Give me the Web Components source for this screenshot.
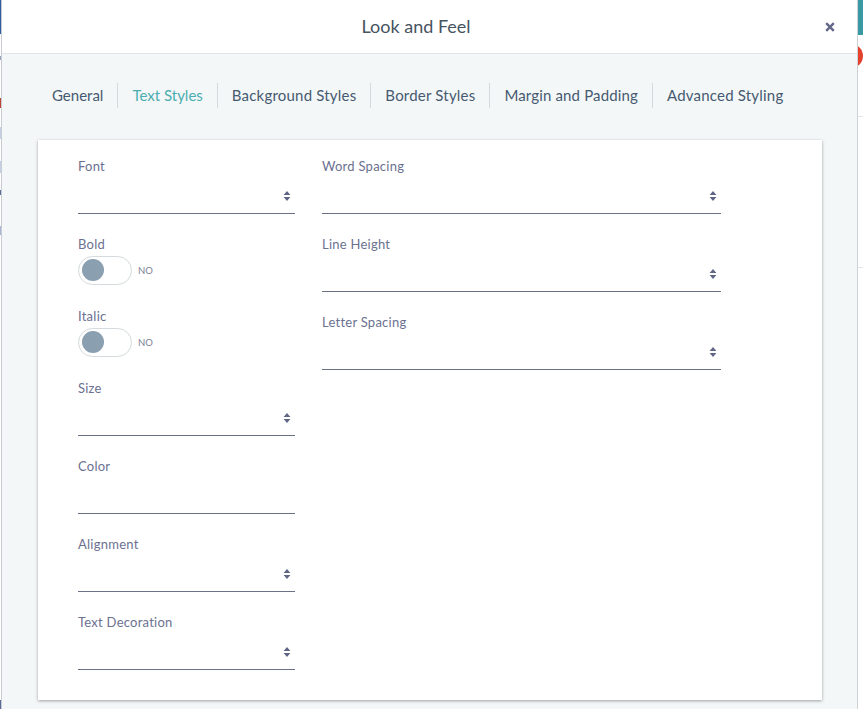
<!DOCTYPE html>
<html><head><meta charset="utf-8"><style>
html,body{margin:0;height:100%;background:#fff;overflow:hidden}
body{font-family:"Lato","Noto Sans",sans-serif}
</style></head><body>
<template id="t-app"><style>
:host{display:flex;width:863px;height:709px;overflow:hidden}
.l{flex:0 0 2px;background:linear-gradient(#c9ccd2,#c9ccd2) 1px 0/1px 100% no-repeat,linear-gradient(to bottom,#2f5c9f 0 34px,#fff 34px 56px,#98a4bd 56px 60px,#fff 60px 98px,#c0463a 98px 108px,#fff 108px 127px,#c3d0e3 127px 139px,#fff 139px 161px,#c3d0e3 161px 173px,#fff 173px 190px,#5a6b96 190px 195px,#fff 195px 226px,#a9b6cf 226px 235px,#fff 235px 700px,#5a6b96 700px 709px) 0 0/1px 100% no-repeat}
.m{flex:0 0 855px;display:block}
.r{flex:1;position:relative;background:#fff;overflow:hidden}
.teal{height:35px;background:#3a9aa3}
.dot{position:absolute;left:-18px;top:44px;width:24px;height:24px;border-radius:50%;background:#e4412f}
.ln{position:absolute;left:0;right:0;height:1px;background:#dfe6e8}
.edge{position:absolute;left:0;top:0;bottom:0;width:1px;background:#cfd2d4}
</style><div class="l"></div><div class="m"><slot></slot></div><div class="r"><div class="teal"></div><div class="dot"></div><div class="ln" style="top:116px"></div><div class="ln" style="top:267px"></div><div class="edge"></div></div></template>

<template id="t-modal"><style>
:host{display:flex;flex-direction:column;height:709px;background:#f4f7f8;border-radius:0 6px 0 0;overflow:hidden}
header{flex:0 0 53px;box-sizing:content-box;background:#fff;border-bottom:1px solid #e1e5e8;display:flex;align-items:center;justify-content:center;position:relative;font-size:18px;color:#47535f;padding-right:27px}
header span{margin-top:-2px}
svg{position:absolute;left:823px;top:22px;width:10px;height:10px}
.b{padding:28px 35px 0 36px;display:flex;flex-direction:column;gap:32px}
</style><header><span>Look and Feel</span><svg viewBox="0 0 10 10"><path d="M1.2 1.2 8.8 8.8M8.8 1.2 1.2 8.8" stroke="#64698a" stroke-width="2.4" fill="none"/></svg></header><div class="b"><slot></slot></div></template>

<template id="t-tabs"><style>
:host{display:flex;height:26px;align-items:center;padding-left:0}
</style><slot></slot></template>

<template id="t-tab"><style>
:host{display:flex;align-items:center;height:25px;padding:0 14px;border-left:1px solid #d5d9dc;font-size:15px;letter-spacing:.2px;color:#465a70;white-space:nowrap}
:host(:first-child){border-left:0;letter-spacing:0}
:host([active]){color:#4aaeb0;letter-spacing:0}
:host([tight]){letter-spacing:.15px}
</style><slot></slot></template>

<template id="t-card"><style>
:host{display:grid;grid-template-columns:217px 399px;column-gap:27px;align-items:start;height:560px;box-sizing:border-box;padding:14px 0 0 40px;background:#fff;box-shadow:0 1px 3px rgba(0,0,0,.35)}
</style><slot></slot></template>

<template id="t-col"><style>:host{display:flex;flex-direction:column}</style><slot></slot></template>

<template id="t-field"><style>
:host{display:block;height:78px;box-sizing:border-box;position:relative}
label{display:block;height:24px;line-height:24px;font-size:13px;letter-spacing:.25px;color:#6b7190}
.s{height:36px;border-bottom:1px solid #6b7084;box-sizing:border-box;display:flex;justify-content:flex-end;align-items:center;padding:0 4px 0 0}
svg{width:8px;height:12px;display:block}
</style><label><slot></slot></label><div class="s"><svg viewBox="0 0 8 12"><path d="M4 1 7.4 5H.6zM4 11 .6 7h6.8z" fill="#5f6583"/></svg></div></template>

<template id="t-plain"><style>
:host{display:block;height:78px}
label{display:block;height:24px;line-height:24px;font-size:13px;letter-spacing:.25px;color:#6b7190}
.s{height:36px;border-bottom:1px solid #6b7084;box-sizing:border-box}
</style><label><slot></slot></label><div class="s"></div></template>

<template id="t-toggle"><style>
:host{display:block;height:72px}
label{display:block;height:24px;line-height:24px;font-size:13px;letter-spacing:.25px;color:#6b7190}
.w{display:flex;align-items:center;gap:6px}
.t{width:54px;height:29px;box-sizing:border-box;border:1px solid #d4dadd;border-radius:15px;display:flex;align-items:flex-start;padding:2px 0 0 3px;background:#fff}
.k{width:22px;height:22px;border-radius:50%;background:#8a9fb0}
span{font-size:9.5px;color:#7d8296}
</style><label><slot></slot></label><div class="w"><div class="t"><div class="k"></div></div><span>NO</span></div></template>

<x-app><x-modal>
<x-tabs><x-tab>General</x-tab><x-tab active>Text Styles</x-tab><x-tab>Background Styles</x-tab><x-tab>Border Styles</x-tab><x-tab tight>Margin and Padding</x-tab><x-tab>Advanced Styling</x-tab></x-tabs>
<x-card>
<x-col><x-field>Font</x-field><x-toggle>Bold</x-toggle><x-toggle>Italic</x-toggle><x-field>Size</x-field><x-plain>Color</x-plain><x-field>Alignment</x-field><x-field>Text Decoration</x-field></x-col>
<x-col><x-field>Word Spacing</x-field><x-field>Line Height</x-field><x-field>Letter Spacing</x-field></x-col>
</x-card>
</x-modal></x-app>
<script>
for(const [n,id] of [['x-app','t-app'],['x-modal','t-modal'],['x-tabs','t-tabs'],['x-tab','t-tab'],['x-card','t-card'],['x-col','t-col'],['x-field','t-field'],['x-plain','t-plain'],['x-toggle','t-toggle']]){
customElements.define(n,class extends HTMLElement{constructor(){super();this.attachShadow({mode:'open'}).appendChild(document.getElementById(id).content.cloneNode(true))}})
}
</script>
</body></html>
